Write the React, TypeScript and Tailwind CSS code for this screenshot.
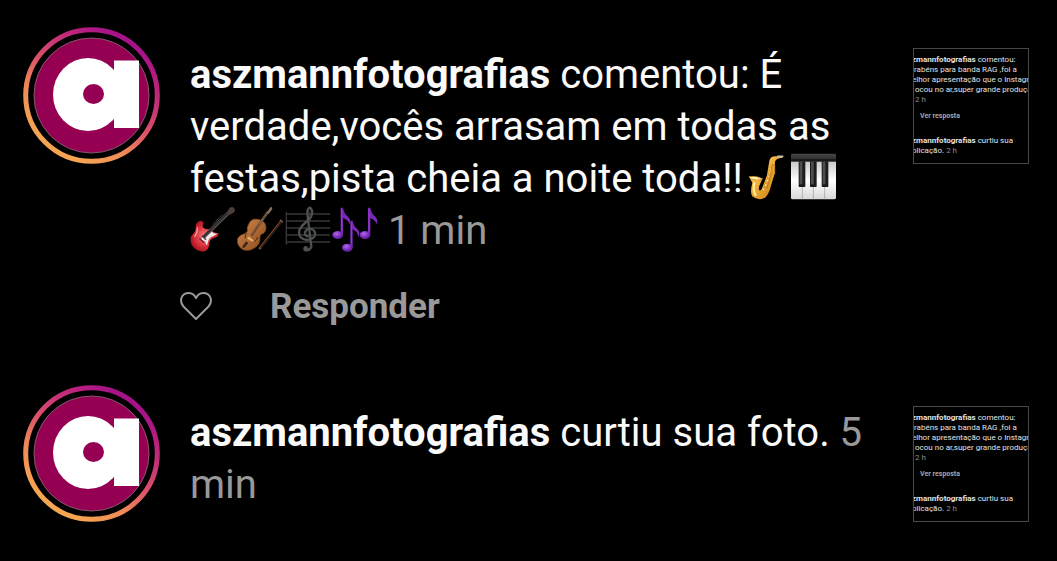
import type { ReactNode } from "react";

const Avatar = ({ id }: { id: string }) => (
    <svg viewBox="0 0 137 137" className="size-[137px] shrink-0" role="img" aria-label="aszmannfotografias">
        <defs>
            <linearGradient id={id} x1="0.8" y1="0.1" x2="0.25" y2="0.9">
                <stop offset="0" stopColor="#a5128a" />
                <stop offset="0.15" stopColor="#b81f7f" />
                <stop offset="0.5" stopColor="#d9506a" />
                <stop offset="0.75" stopColor="#ef8a58" />
                <stop offset="1" stopColor="#f5a552" />
            </linearGradient>
        </defs>
        <circle cx="68.5" cy="68.5" r="65.8" fill="none" stroke={`url(#${id})`} strokeWidth="5" />
        <circle cx="68.5" cy="68.5" r="57.5" fill="#950053" stroke="#87566f" strokeWidth="1" />
        {/* Brand mark */}
        <ellipse cx="65" cy="67.5" rx="35" ry="36.5" fill="#fff" />
        <rect x="91" y="33.5" width="25" height="67.5" fill="#fff" />
        <ellipse cx="70.5" cy="67" rx="10.5" ry="10" fill="#950053" />
    </svg>
);

const Emoji = ({ viewBox, label, children }: { viewBox: string; label: string; children: ReactNode }) => (
    <svg viewBox={viewBox} className="inline-block size-[47px] align-[-8px]" role="img" aria-label={label}>
        {children}
    </svg>
);

const Saxophone = () => (
    <Emoji viewBox="18 28 141 141" label="saxofone">
        <defs>
            <linearGradient id="brass" x1="0" y1="0" x2="1" y2="1">
                <stop offset="0" stopColor="#ffe08a" />
                <stop offset="0.5" stopColor="#edaa32" />
                <stop offset="1" stopColor="#b96d0c" />
            </linearGradient>
        </defs>
        <path d="M137 37 L115 38 Q99 38 97 52 L90 94 L74 137 Q69 143 66 138 Q64 132 68 124 L76 106 L36 99 L46 117 Q38 147 46 158 Q65 174 86 161 Q93 154 98 140 L111 96 L114 54 Q116 44 137 42Z" fill="url(#brass)" />
        <path d="M36 99 Q56 94 77 105 Q61 113 43 106Z" fill="#fff0aa" stroke="#c98117" strokeWidth="2" />
        <path d="M52 118 Q47 143 56 154" fill="none" stroke="#fff1a5" strokeWidth="6" strokeLinecap="round" />
        <path d="M107 61 L101 98 L89 135" fill="none" stroke="#a5670f" strokeWidth="2" />
        <path d="M104 65h9v27h-8z" fill="none" stroke="#d8901f" strokeWidth="3" />
        <g fill="#ffe18b" stroke="#a5670f" strokeWidth="1">
            <circle cx="99" cy="75" r="3" />
            <circle cx="97" cy="86" r="3" />
            <circle cx="94" cy="98" r="3" />
            <circle cx="91" cy="111" r="4" />
            <circle cx="86" cy="124" r="4" />
            <circle cx="79" cy="137" r="4" />
        </g>
        <path d="M123 38h14" stroke="#c8c6bd" strokeWidth="5" strokeLinecap="round" />
    </Emoji>
);

const Piano = () => (
    <Emoji viewBox="159 28 141 141" label="teclado musical">
        <defs>
            <linearGradient id="ivory" x1="0" y1="0" x2="0" y2="1">
                <stop offset="0" stopColor="#c9c9c9" />
                <stop offset="0.5" stopColor="#fff" />
                <stop offset="1" stopColor="#d8d8d8" />
            </linearGradient>
            <linearGradient id="ebony" x1="0" y1="0" x2="0" y2="1">
                <stop offset="0" stopColor="#474747" />
                <stop offset="1" stopColor="#202020" />
            </linearGradient>
        </defs>
        <rect x="162" y="30" width="135" height="28" rx="4" fill="url(#ebony)" />
        <path d="M163 49h133" stroke="#141414" strokeWidth="4" />
        <path d="M162 54h135v108q0 5-5 5H167q-5 0-5-5z" fill="url(#ivory)" />
        <path d="M196 54v113M229 54v113M263 54v113" stroke="#999" strokeWidth="2" />
        <g fill="#1c1c1c">
            <rect x="185" y="53" width="20" height="77" rx="2" />
            <rect x="219" y="53" width="20" height="77" rx="2" />
            <rect x="254" y="53" width="20" height="77" rx="2" />
        </g>
        <g fill="#4e4e4e">
            <rect x="188" y="54" width="8" height="68" />
            <rect x="222" y="54" width="8" height="68" />
            <rect x="257" y="54" width="8" height="68" />
        </g>
    </Emoji>
);

const Guitar = () => (
    <Emoji viewBox="30 19 141 141" label="guitarra">
        <defs>
            <radialGradient id="guitarBody">
                <stop offset="0" stopColor="#f98084" />
                <stop offset="0.6" stopColor="#dc3540" />
                <stop offset="1" stopColor="#ae1625" />
            </radialGradient>
        </defs>
        <path d="M34 111 Q48 99 47 86 Q46 70 62 66 Q75 67 68 80 Q67 89 78 91 L91 92 Q101 104 114 103 Q119 108 110 116 Q91 117 88 131 Q88 157 70 159 Q48 158 35 139 Q29 124 34 111Z" fill="url(#guitarBody)" />
        <path d="M89 93 L101 104 L113 105 L99 113 Q86 116 83 132 Q80 149 76 129 L63 122Z" fill="#eee9ed" />
        <path d="M71 115 L145 43" stroke="#55504f" strokeWidth="11" />
        <path d="M70 115 L144 42" stroke="#2d2a2a" strokeWidth="5" />
        <path d="M140 42 L149 27 Q162 21 165 34 Q165 42 150 48Z" fill="#4c4038" />
        <path d="M58 119l14 13M66 111l12 12" stroke="#572c31" strokeWidth="4" />
        <path d="M43 114 Q53 104 52 86" fill="none" stroke="#ff9a9d" strokeWidth="4" />
        <path d="M97 78l18-19M108 67l20-20" stroke="#8d8888" strokeWidth="1" />
    </Emoji>
);

const Violin = () => (
    <Emoji viewBox="171 19 141 141" label="violino">
        <defs>
            <linearGradient id="violinBody" x1="0" y1="0" x2="1" y2="1">
                <stop offset="0" stopColor="#d18a4d" />
                <stop offset="1" stopColor="#8a481d" />
            </linearGradient>
        </defs>
        <path d="M205 78 Q211 60 229 61 Q249 62 256 76 Q263 94 250 105 Q239 106 240 118 Q242 136 224 148 Q206 160 189 153 Q169 142 172 121 Q177 109 193 105 Q205 101 201 88Z" fill="url(#violinBody)" stroke="#63320f" strokeWidth="2" />
        <path d="M214 112 L238 76" stroke="#5a3a24" strokeWidth="6" />
        <path d="M238 76 L264 39" stroke="#6b5039" strokeWidth="8" />
        <path d="M261 41 L270 27 Q276 21 277 31 L265 47Z" fill="#85735e" />
        <path d="M186 145 L198 128 L205 133 L192 149Z" fill="#3d281b" />
        <path d="M203 116l16 11" stroke="#eab56f" strokeWidth="6" />
        <path d="M200 104q-8 9-3 15M233 115q-2 10-9 13" fill="none" stroke="#4e270f" strokeWidth="3" />
        <path d="M203 128l45-67" stroke="#c7a582" strokeWidth="1" />
        <path d="M237 149 L303 66" stroke="#80401f" strokeWidth="4" />
        <path d="M242 150 L307 69" stroke="#a69c90" strokeWidth="1" />
        <path d="M300 64l8 6M236 147l7 4" stroke="#74513c" strokeWidth="5" />
    </Emoji>
);

const Score = () => (
    <Emoji viewBox="312 19 141 141" label="partitura">
        <path d="M319 40v98M318 46h132M318 67h132M318 88h132M318 109h132M318 130h132" stroke="#373737" strokeWidth="4" />
        <path d="M374 154 Q388 159 394 144 L382 44 Q382 27 391 27 Q403 40 389 61 L367 81 Q350 99 362 116 Q378 130 398 119 Q412 107 400 94 Q384 84 376 99 Q372 110 383 113" fill="none" stroke="#4d5050" strokeWidth="7" strokeLinecap="round" />
        <circle cx="377" cy="149" r="7" fill="#4d5050" />
        <path d="M387 35q6 12-2 23l-23 26" fill="none" stroke="#737777" strokeWidth="1" />
    </Emoji>
);

const Notes = () => (
    <Emoji viewBox="453 19 141 141" label="notas musicais">
        <defs>
            <radialGradient id="noteHead" cx="0.4" cy="0.35">
                <stop offset="0" stopColor="#b366f0" />
                <stop offset="1" stopColor="#6d22ae" />
            </radialGradient>
        </defs>
        <g fill="#7928b6">
            <path d="M482 27h7q2 17 15 27 11 10 4 23-2-13-19-19v49h-7z" />
            <path d="M511 66h7q2 16 14 25 11 11 3 25-1-16-17-24v56h-7z" />
            <path d="M564 27h7q2 17 15 27 10 10 3 23-2-13-18-19v49h-7z" />
        </g>
        <g fill="url(#noteHead)">
            <ellipse cx="473" cy="109" rx="16" ry="12" />
            <ellipse cx="502" cy="147" rx="16" ry="12" />
            <ellipse cx="555" cy="109" rx="16" ry="12" />
        </g>
        <path d="M485 32v65M514 72v62M567 32v65" stroke="#a34bda" strokeWidth="2" />
    </Emoji>
);

const Thumbnail = () => (
    <a
        href="#post"
        className="mt-[21px] block size-[116px] shrink-0 overflow-hidden border border-[#484848] pt-[6px] text-[8px] leading-[10px] whitespace-nowrap text-[#e2e2e2]"
    >
        <p className="-ml-[2px]">
            <strong>zmannfotografias</strong> comentou:
        </p>
        <p>rabéns para banda RAG ,foi a</p>
        <p className="-ml-[2px]">elhor apresentação que o Instagr</p>
        <p className="pl-[1px]">ocou no ar,super grande produçã</p>
        <p className="pl-[1px] text-[#8d8d8d]">2 h</p>
        <p className="mt-[6px] pl-[6px] text-[7px] font-bold text-[#a5a5a5]">Ver resposta</p>
        <p className="mt-[15px] -ml-[2px]">
            <strong>zmannfotografias</strong> curtiu sua
        </p>
        <p className="-ml-[2px]">
            blicação. <span className="text-[#8d8d8d]">2 h</span>
        </p>
    </a>
);

const Notification = ({ id, children, actions }: { id: string; children: ReactNode; actions?: ReactNode }) => (
    <li className="flex items-start">
        <Avatar id={id} />
        <div className="min-w-0 flex-1 pt-[22px] pr-9 pl-5">
            <p className="pl-[10px] text-[40px] leading-[52px]">{children}</p>
            {actions}
        </div>
        <Thumbnail />
    </li>
);

const Actions = () => (
    <div className="mt-6 flex items-center gap-[58px] text-[#999]">
        <button type="button" aria-label="Curtir">
            <svg viewBox="0 0 32 30" className="h-[30px] w-8" fill="none" stroke="currentColor" strokeWidth="2">
                <path d="M16 27 L3.5 14.5 C-1 9.5 1 1.5 8 1 C12 0.8 14.5 3 16 6 C17.5 3 20 0.8 24 1 C31 1.5 33 9.5 28.5 14.5Z" strokeLinejoin="round" />
            </svg>
        </button>
        <button type="button" className="text-[35px] leading-[52px] font-bold">
            Responder
        </button>
    </div>
);

export default function App() {
    return (
        <main className="min-h-screen bg-black pt-[27px] pr-7 pb-8 pl-[23px] font-['Roboto',sans-serif] text-[#fafafa]">
            <ul className="flex flex-col gap-[52px]">
                <Notification id="ring-comment" actions={<Actions />}>
                    <strong>aszmannfotografias</strong> comentou: É verdade,vocês arrasam em todas as festas,pista cheia a noite toda!!
                    <Saxophone />
                    <Piano />
                    <Guitar />
                    <Violin />
                    <Score />
                    <Notes /> <span className="text-[#999]">1 min</span>
                </Notification>
                <Notification id="ring-like">
                    <strong>aszmannfotografias</strong> curtiu sua foto. <span className="text-[#999]">5 min</span>
                </Notification>
            </ul>
        </main>
    );
}
